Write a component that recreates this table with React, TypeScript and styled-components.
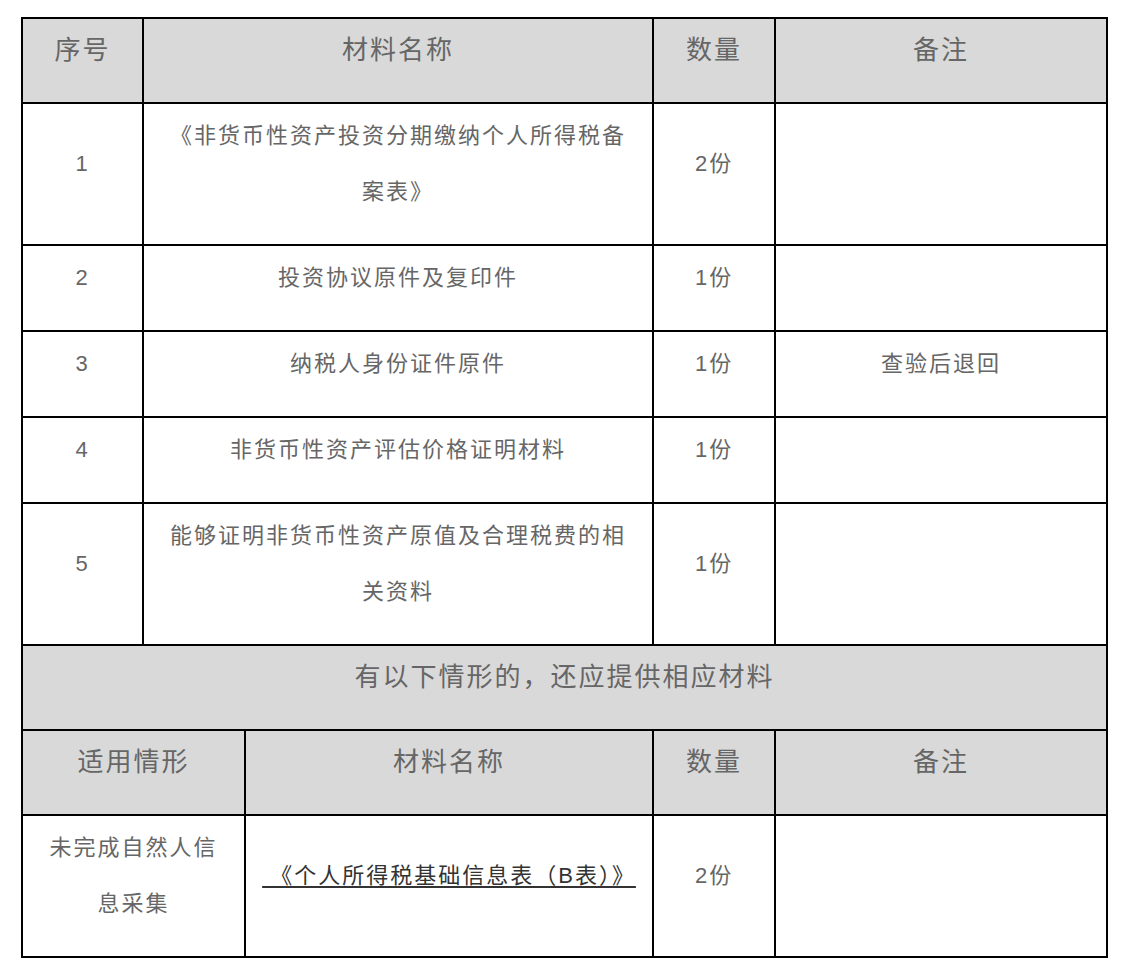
import React from 'react'
import styled, { createGlobalStyle } from 'styled-components'

const GlobalStyle = createGlobalStyle`
  body {
    margin: 0;
    background: #ffffff;
    font-family: "Liberation Sans", "Noto Sans CJK SC", sans-serif;
  }
`

const Page = styled.div`
  padding: 17px 14px 8px 21px;
`

const Table = styled.table`
  width: 1087px;
  table-layout: fixed;
  border-collapse: separate;
  border-spacing: 0;
  border-top: 2px solid #000;
  border-left: 2px solid #000;
`

const Cell = styled.td<{ $head?: boolean; $tight?: boolean }>`
  box-sizing: border-box;
  border-right: 2px solid #000;
  border-bottom: 2px solid #000;
  padding: ${(p) => (p.$head ? '3px' : '4px')} ${(p) => (p.$tight ? '4px' : '24px')} 0;
  background: ${(p) => (p.$head ? '#d9d9d9' : '#ffffff')};
  color: #666666;
  font-size: ${(p) => (p.$head ? '26px' : '22px')};
  letter-spacing: 2px;
  font-weight: normal;
  text-align: center;
  vertical-align: middle;
`

const Para = styled.p`
  margin: 0 0 24px;
  line-height: 56px;
`

const DocLink = styled.span`
  color: #333333;
  white-space: nowrap;
  text-decoration: underline;
  text-decoration-thickness: 2px;
  text-underline-offset: 3px;
`

type Row = { no: string; name: string; qty: string; note?: string }

const rows: Row[] = [
  { no: '1', name: '《非货币性资产投资分期缴纳个人所得税备案表》', qty: '2份' },
  { no: '2', name: '投资协议原件及复印件', qty: '1份' },
  { no: '3', name: '纳税人身份证件原件', qty: '1份', note: '查验后退回' },
  { no: '4', name: '非货币性资产评估价格证明材料', qty: '1份' },
  { no: '5', name: '能够证明非货币性资产原值及合理税费的相关资料', qty: '1份' },
]

const App = () => {
  return (
    <Page>
      <GlobalStyle />
      <Table>
        <colgroup>
          <col style={{ width: 121 }} />
          <col style={{ width: 102 }} />
          <col style={{ width: 408 }} />
          <col style={{ width: 122 }} />
          <col style={{ width: 332 }} />
        </colgroup>
        <tbody>
          <tr>
            <Cell as="th" $head><Para>序号</Para></Cell>
            <Cell as="th" $head colSpan={2}><Para>材料名称</Para></Cell>
            <Cell as="th" $head><Para>数量</Para></Cell>
            <Cell as="th" $head><Para>备注</Para></Cell>
          </tr>
          {rows.map((r) => (
            <tr key={r.no}>
              <Cell><Para>{r.no}</Para></Cell>
              <Cell colSpan={2}><Para>{r.name}</Para></Cell>
              <Cell><Para>{r.qty}</Para></Cell>
              <Cell><Para>{r.note}</Para></Cell>
            </tr>
          ))}
          <tr>
            <Cell $head colSpan={5}><Para>有以下情形的，还应提供相应材料</Para></Cell>
          </tr>
          <tr>
            <Cell as="th" $head colSpan={2}><Para>适用情形</Para></Cell>
            <Cell as="th" $head><Para>材料名称</Para></Cell>
            <Cell as="th" $head><Para>数量</Para></Cell>
            <Cell as="th" $head><Para>备注</Para></Cell>
          </tr>
          <tr>
            <Cell colSpan={2}><Para>未完成自然人信息采集</Para></Cell>
            <Cell $tight>
              <Para>
                <DocLink>&nbsp;《个人所得税基础信息表（B表）》</DocLink>
              </Para>
            </Cell>
            <Cell><Para>2份</Para></Cell>
            <Cell><Para /></Cell>
          </tr>
        </tbody>
      </Table>
    </Page>
  )
}

export default App
